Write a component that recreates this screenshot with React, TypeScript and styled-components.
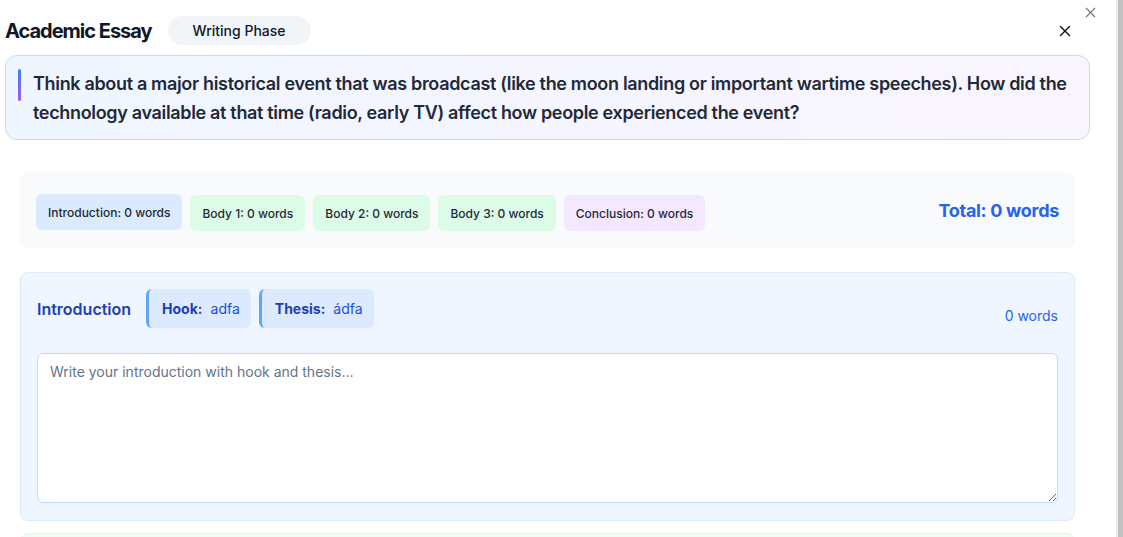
import React from 'react';
import styled, { createGlobalStyle } from 'styled-components';
import { X } from 'lucide-react';

const GlobalStyle = createGlobalStyle`
  html, body {
    margin: 0;
    padding: 0;
    background: #fff;
    font-family: Inter, "Noto Sans", "Liberation Sans", sans-serif;
    color: #0f172a;
    overflow: hidden;
  }
  * { box-sizing: border-box; }
`;

const Screen = styled.div`
  display: flex;
  height: 537px;
  width: 1123px;
  overflow: hidden;
`;

const Dialog = styled.div`
  position: relative;
  flex: 1;
  padding: 16px 0 0 5px;
  background: #fff;
`;

const ScrollRail = styled.div`
  width: 7px;
  border-left: 2px solid #ececec;
  background: #c1c1c1;
`;

const DialogClose = styled.button`
  position: absolute;
  top: 4px;
  right: 17px;
  border: 0;
  background: none;
  padding: 0;
  color: #475569;
  opacity: 0.8;
  display: flex;
`;

const Header = styled.div`
  display: flex;
  align-items: center;
  gap: 16px;
  padding-right: 42px;
  height: 29px;
`;

const Title = styled.h2`
  margin: 0;
  font-size: 20px;
  font-weight: 700;
  letter-spacing: -1px;
  color: #0f172a;
`;

const PhasePill = styled.span`
  display: inline-flex;
  align-items: center;
  height: 29px;
  padding: 0 25px;
  border-radius: 999px;
  background: #f1f5f9;
  font-size: 14px;
  font-weight: 500;
  color: #0f172a;
`;

const HeaderClose = styled.button`
  margin-left: auto;
  border: 0;
  background: none;
  padding: 0;
  color: #0f172a;
  display: flex;
`;

const Prompt = styled.div`
  margin: 10px 26px 0 0;
  display: flex;
  align-items: flex-start;
  gap: 12px;
  padding: 13px 12px 12px 12px;
  border: 1px solid #bfdbfe;
  border-radius: 12px;
  background: linear-gradient(90deg, #eff6ff, #faf5ff);
`;

const AccentBar = styled.div`
  flex: none;
  width: 3px;
  height: 32px;
  border-radius: 2px;
  background: linear-gradient(180deg, #3b82f6, #a855f7);
`;

const PromptText = styled.p`
  margin: 0;
  font-size: 18px;
  font-weight: 600;
  line-height: 29px;
  letter-spacing: -0.33px;
  color: #1f2937;
`;

const Body = styled.div`
  padding: 32px 41px 0 15px;
  display: flex;
  flex-direction: column;
  gap: 24px;
`;

const CountBar = styled.div`
  display: flex;
  align-items: center;
  justify-content: space-between;
  padding: 23px 16px 17px;
  border-radius: 8px;
  background: #f8fafc;
`;

const ChipRow = styled.div`
  display: flex;
  gap: 8px;
  flex-wrap: wrap;
`;

const chipColors = {
  blue: '#dbeafe',
  green: '#dcfce7',
  purple: '#f3e8ff',
};

const CountChip = styled.span<{ $tone: keyof typeof chipColors }>`
  display: inline-flex;
  align-items: center;
  height: 36px;
  padding: 0 12px;
  border-radius: 6px;
  background: ${(p) => chipColors[p.$tone]};
  font-size: 12px;
  font-weight: 500;
  color: #1f2937;
  margin-top: ${(p) => (p.$tone === 'blue' ? '-1px' : '0')};
`;

const Total = styled.span`
  margin-bottom: 6px;
  font-size: 18px;
  font-weight: 700;
  letter-spacing: -0.3px;
  color: #2563eb;
`;

const Section = styled.section<{ $bg: string; $border: string }>`
  flex: none;
  padding: 16px 16px 17px;
  border: 1px solid ${(p) => p.$border};
  border-radius: 8px;
  background: ${(p) => p.$bg};
`;

const SectionHead = styled.div`
  display: flex;
  align-items: center;
  gap: 15px;
  margin-bottom: 25px;
`;

const SectionTitle = styled.h3`
  margin: 0;
  font-size: 16px;
  font-weight: 600;
  color: #1e40af;
`;

const PartChips = styled.div`
  display: flex;
  gap: 8px;
`;

const PartChip = styled.div`
  display: flex;
  align-items: center;
  gap: 8px;
  height: 39px;
  padding: 0 11px 0 13px;
  border-left: 3px solid #60a5fa;
  border-radius: 6px;
  background: #dbeafe;
  font-size: 14px;
`;

const PartLabel = styled.span`
  font-weight: 700;
  color: #1e40af;
`;

const PartValue = styled.span`
  color: #1d4ed8;
`;

const WordCount = styled.span`
  margin-left: auto;
  margin-top: 14px;
  font-size: 14px;
  color: #2563eb;
`;

const Editor = styled.textarea`
  display: block;
  width: 100%;
  height: 150px;
  padding: 8px 12px;
  border: 1px solid #bfdbfe;
  border-radius: 6px;
  background: #fff;
  font-family: inherit;
  font-size: 14px;
  line-height: 20px;
  color: #1f2937;
  resize: vertical;
  outline: none;
  &::placeholder {
    color: #64748b;
  }
`;

const NextSection = styled.div`
  height: 40px;
  border: 1px solid #dcfce7;
  border-radius: 8px;
  background: #f0fdf4;
  margin-top: -12px;
`;

const counts = [
  { label: 'Introduction', tone: 'blue' as const },
  { label: 'Body 1', tone: 'green' as const },
  { label: 'Body 2', tone: 'green' as const },
  { label: 'Body 3', tone: 'green' as const },
  { label: 'Conclusion', tone: 'purple' as const },
];

const App: React.FC = () => {
  return (
    <Screen>
      <GlobalStyle />
      <Dialog>
        <DialogClose aria-label="Close dialog">
          <X size={17} strokeWidth={1.6} />
        </DialogClose>
        <Header>
          <Title>Academic Essay</Title>
          <PhasePill>Writing Phase</PhasePill>
          <HeaderClose aria-label="Close">
            <X size={18} strokeWidth={2} />
          </HeaderClose>
        </Header>

        <Prompt>
          <AccentBar />
          <PromptText>
            Think about a major historical event that was broadcast (like the moon landing or important wartime
            speeches). How did the technology available at that time (radio, early TV) affect how people experienced
            the event?
          </PromptText>
        </Prompt>

        <Body>
          <CountBar>
            <ChipRow>
              {counts.map((c) => (
                <CountChip key={c.label} $tone={c.tone}>
                  {c.label}: 0 words
                </CountChip>
              ))}
            </ChipRow>
            <Total>Total: 0 words</Total>
          </CountBar>

          <Section $bg="#eff6ff" $border="#dbeafe">
            <SectionHead>
              <SectionTitle>Introduction</SectionTitle>
              <PartChips>
                <PartChip>
                  <PartLabel>Hook:</PartLabel>
                  <PartValue>adfa</PartValue>
                </PartChip>
                <PartChip>
                  <PartLabel>Thesis:</PartLabel>
                  <PartValue>ádfa</PartValue>
                </PartChip>
              </PartChips>
              <WordCount>0 words</WordCount>
            </SectionHead>
            <Editor placeholder="Write your introduction with hook and thesis..." />
          </Section>

          <NextSection />
        </Body>
      </Dialog>
      <ScrollRail />
    </Screen>
  );
};

export default App;
